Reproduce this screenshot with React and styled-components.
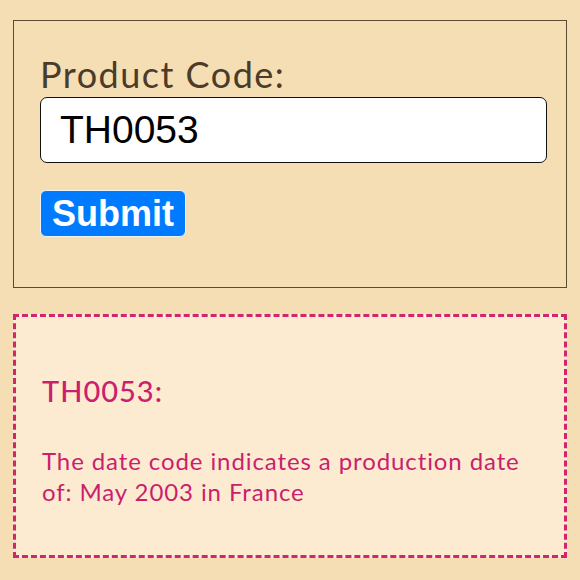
import styled, { createGlobalStyle } from 'styled-components'

const Global = createGlobalStyle`
    html, body {
        margin: 0;
        background: #f5deb3;
    }
`
const Page = styled.main`
    padding: 20px 13px 0 13px;
    display: flex;
    flex-direction: column;
    gap: 26px;
`
const FormBox = styled.form`
    box-sizing: border-box;
    height: 268px;
    border: 1.5px solid #5b4a35;
    padding: 31px 19px 0 26px;
    display: flex;
    flex-direction: column;
    align-items: flex-start;
`
const Label = styled.label`
    font-family: Lato, "Open Sans", sans-serif;
    font-size: 36px;
    line-height: 44px;
    letter-spacing: 1.5px;
    color: #4a3b2a;
`
const CodeInput = styled.input`
    box-sizing: border-box;
    width: 100%;
    height: 66px;
    margin-top: 1px;
    padding: 0 19px;
    border: 1.5px solid #111;
    border-radius: 7px;
    background: #fff;
    font-family: "Liberation Sans", Arial, sans-serif;
    font-size: 39px;
    color: #000;
    outline: none;
`
const SubmitButton = styled.button`
    margin-top: 27px;
    padding: 2px 11px;
    border: 1px solid #f3f3f3;
    border-radius: 6px;
    background: #007bff;
    color: #fff;
    font-family: "Liberation Sans", Arial, sans-serif;
    font-weight: bold;
    font-size: 36px;
    line-height: 41px;
`
const ResultBox = styled.section`
    box-sizing: border-box;
    height: 244px;
    border: 3px dashed #d1256f;
    background: #fdebd1;
    padding: 57px 26px 0 26px;
    display: flex;
    flex-direction: column;
    color: #c91f6e;
    font-family: Lato, "Open Sans", sans-serif;
`
const ResultTitle = styled.h2`
    margin: 0 0 37px 0;
    font-size: 29px;
    font-weight: 500;
    line-height: 34px;
    letter-spacing: 1px;
`
const ResultText = styled.p`
    margin: 0;
    font-size: 24px;
    line-height: 31px;
    letter-spacing: 0.9px;
`

function App() {
    return (
        <>
            <Global />
            <Page>
                <FormBox onSubmit={evento => evento.preventDefault()}>
                    <Label htmlFor="code">Product Code:</Label>
                    <CodeInput id="code" defaultValue="TH0053" />
                    <SubmitButton type="submit">Submit</SubmitButton>
                </FormBox>
                <ResultBox>
                    <ResultTitle>TH0053:</ResultTitle>
                    <ResultText>
                        The date code indicates a production date of: May 2003 in France
                    </ResultText>
                </ResultBox>
            </Page>
        </>
    )
}

export default App
